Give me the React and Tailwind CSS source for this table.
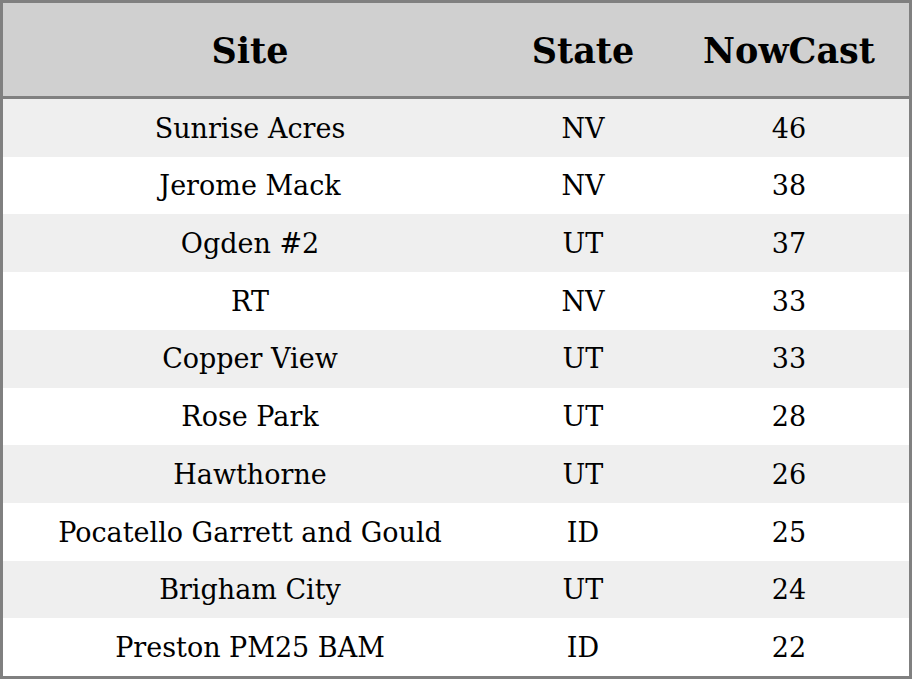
import React from "react";

const rows = [
  ["Sunrise Acres", "NV", "46"],
  ["Jerome Mack", "NV", "38"],
  ["Ogden #2", "UT", "37"],
  ["RT", "NV", "33"],
  ["Copper View", "UT", "33"],
  ["Rose Park", "UT", "28"],
  ["Hawthorne", "UT", "26"],
  ["Pocatello Garrett and Gould", "ID", "25"],
  ["Brigham City", "UT", "24"],
  ["Preston PM25 BAM", "ID", "22"],
];

export default function App() {
  return (
    <div
      className="w-[912px] h-[679px] border-[3px] border-[#808080] flex flex-col bg-white text-black"
      style={{ fontFamily: '"DejaVu Serif", serif' }}
    >
      <div className="h-[96px] shrink-0 border-b-[3px] border-[#808080] bg-[#d0d0d0] grid grid-cols-[494px_172px_1fr] items-center pt-[3px] text-[35px] font-bold">
        <div className="text-center">Site</div>
        <div className="text-center">State</div>
        <div className="text-center">NowCast</div>
      </div>
      {rows.map((r, i) => (
        <div
          key={i}
          className={`flex-1 grid grid-cols-[494px_172px_1fr] items-center pt-[2px] text-[27px] ${
            i % 2 === 0 ? "bg-[#efefef]" : "bg-white"
          }`}
        >
          <div className="text-center">{r[0]}</div>
          <div className="text-center">{r[1]}</div>
          <div className="text-center">{r[2]}</div>
        </div>
      ))}
    </div>
  );
}
